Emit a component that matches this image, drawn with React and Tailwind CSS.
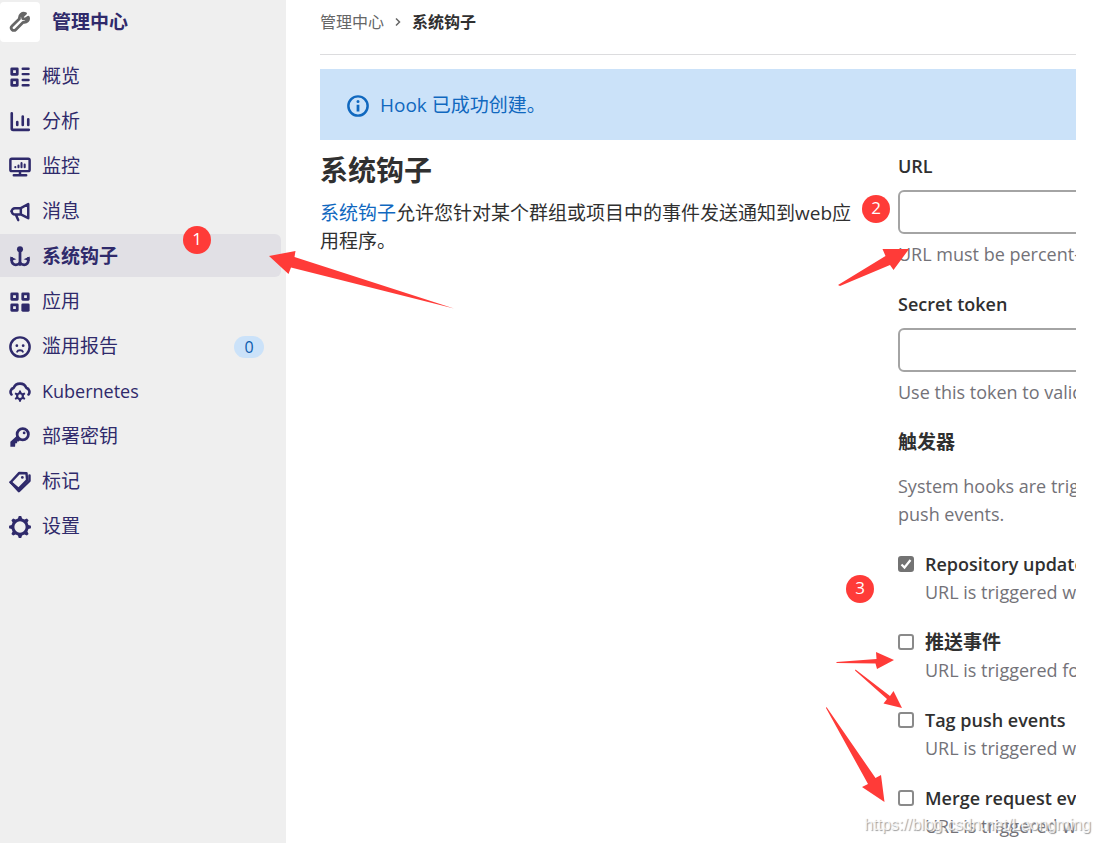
const SANS = "font-['Open_Sans','Noto_Sans_CJK_SC',sans-serif]"

function Icon({ size = 22, children }) {
  return (
    <svg width={size} height={size} viewBox="0 0 16 16" fill="currentColor" fillRule="evenodd" className="shrink-0" aria-hidden="true">
      {children}
    </svg>
  )
}

const stroke = { fill: 'none', stroke: 'currentColor', strokeWidth: 1.8, strokeLinecap: 'round', strokeLinejoin: 'round' }

function gearPath(cx, cy, outer, inner, teeth) {
  const points = []
  for (let i = 0; i < teeth; i++) {
    const base = (i * 2 * Math.PI) / teeth - Math.PI / 2
    const half = Math.PI / teeth
    const steps = [[-half * 0.62, inner], [-half * 0.28, outer], [half * 0.28, outer], [half * 0.62, inner]]
    steps.forEach(([a, r]) => {
      points.push(`${(cx + r * Math.cos(base + a)).toFixed(2)} ${(cy + r * Math.sin(base + a)).toFixed(2)}`)
    })
  }
  return `M${points.join('L')}Z`
}

const ICONS = {
  overview: (
    <>
      <path d="M2 1h4a1 1 0 0 1 1 1v4a1 1 0 0 1-1 1H2a1 1 0 0 1-1-1V2a1 1 0 0 1 1-1Zm1 2v2h2V3ZM2 9h4a1 1 0 0 1 1 1v4a1 1 0 0 1-1 1H2a1 1 0 0 1-1-1v-4a1 1 0 0 1 1-1Zm1 2v2h2v-2Z" />
      <path {...stroke} d="M10 2h4.2M10 5.900h4.200M10 10.100h4.200M10 14h4.200" />
    </>
  ),
  analytics: (
    <path {...stroke} strokeWidth="1.900" d="M2 1.700v11a1 1 0 0 0 1 1h11.400M6 8v2.200M10 4v6.200M14 6v4.200" />
  ),
  monitor: (
    <>
      <path {...stroke} d="M2 2h12a1 1 0 0 1 1 1v7a1 1 0 0 1-1 1H2a1 1 0 0 1-1-1V3a1 1 0 0 1 1-1ZM8 11v2.500M3.500 14h9" />
      <path {...stroke} strokeWidth="1.500" d="M4.600 8v.1M6.900 6.900v1.200M9.100 5.200v2.900M11.400 6.200v1.900" />
    </>
  ),
  bullhorn: (
    <path {...stroke} d="M14 2.200v10.300L8.600 9.800H4.300A2.300 2.300 0 0 1 2 7.500a2.300 2.300 0 0 1 2.300-2.300h4.300ZM8.600 5.300v4.300M5 10l1.700 3.900M2 7.500h-.3" />
  ),
  hook: (
    <>
      <circle cx="8" cy="2.300" r="2.200" />
      <path {...stroke} strokeWidth="2" d="M8 3v10.500M2 9v1.400A3 3 0 0 0 5 13.700C6.500 13.700 8 12.700 8 11.500 8 12.700 9.500 13.700 11 13.700a3 3 0 0 0 3-3.300V9" />
      <path d="m1 7.600 4.400 2-4.400 1.300ZM15 7.600l-4.400 2 4.400 1.300Z" />
    </>
  ),
  applications: (
    <>
      <path d="M2 1h4a1 1 0 0 1 1 1v4a1 1 0 0 1-1 1H2a1 1 0 0 1-1-1V2a1 1 0 0 1 1-1Zm1 2v2h2V3ZM2 9h4a1 1 0 0 1 1 1v4a1 1 0 0 1-1 1H2a1 1 0 0 1-1-1v-4a1 1 0 0 1 1-1Zm1 2v2h2v-2ZM10 1h4a1 1 0 0 1 1 1v4a1 1 0 0 1-1 1h-4a1 1 0 0 1-1-1V2a1 1 0 0 1 1-1Zm1 2v2h2V3Z" />
      <rect x="9" y="9" width="6" height="6" rx="1" />
    </>
  ),
  abuse: (
    <>
      <circle {...stroke} cx="8" cy="8" r="7" />
      <circle cx="5.700" cy="7" r="1" />
      <circle cx="10.300" cy="7" r="1" />
      <path {...stroke} strokeWidth="1.400" d="M5.900 11.400c.4-1.300 3.800-1.300 4.200 0" />
    </>
  ),
  kubernetes: (
    <>
      <path {...stroke} strokeWidth="1.900" d="M1.800 9.800A3 3 0 0 1 3.400 5C4.200 2.800 5.900 1.900 8 1.900s3.800.9 4.600 3.100a3 3 0 0 1 1.600 4.800" />
      <path d={`${gearPath(8, 11, 4.2, 2.9, 6)}M8 9.700a1.300 1.300 0 1 0 0 2.600 1.300 1.300 0 0 0 0-2.600Z`} />
    </>
  ),
  key: (
    <>
      <circle {...stroke} strokeWidth="2" cx="10" cy="6" r="4.100" />
      <path d="m1 11.500 5-4.600 2.700 2.800L7 11.300H5.900v1.300H4.600L4.400 15H1Z" />
      <circle cx="11" cy="5" r="1" />
    </>
  ),
  labels: (
    <>
      <path {...stroke} d="m1.200 8.200 6.300-6.800 5.200.2.500 5L7 13Z" />
      <path {...stroke} d="m1.200 8.200 6 6.500 7.700-7.600V3.300" />
      <circle cx="9.700" cy="4.700" r="1" />
    </>
  ),
  settings: (
    <path d={`${gearPath(8, 8, 8, 6.3, 8)}M8 3.900a4.100 4.100 0 1 0 0 8.200 4.100 4.100 0 0 0 0-8.200Z`} />
  ),
}

const NAV_ITEMS = [
  { label: '概览', icon: 'overview' },
  { label: '分析', icon: 'analytics' },
  { label: '监控', icon: 'monitor' },
  { label: '消息', icon: 'bullhorn' },
  { label: '系统钩子', icon: 'hook', active: true },
  { label: '应用', icon: 'applications' },
  { label: '滥用报告', icon: 'abuse', count: 0 },
  { label: 'Kubernetes', icon: 'kubernetes', latin: true },
  { label: '部署密钥', icon: 'key' },
  { label: '标记', icon: 'labels' },
  { label: '设置', icon: 'settings' },
]

const TRIGGERS = [
  { id: 'repository', label: 'Repository update events', help: 'URL is triggered when', checked: true },
  { id: 'push', label: '推送事件', help: 'URL is triggered for', cjk: true },
  { id: 'tag', label: 'Tag push events', help: 'URL is triggered when' },
  { id: 'merge', label: 'Merge request events', help: 'URL is triggered when' },
]

function Sidebar() {
  return (
    <aside className="w-[286px] shrink-0 bg-[#efefef] text-[#2f2a6b]">
      <a href="#admin" className="flex h-11 items-center gap-3 text-[19px] font-bold">
        <span className="flex size-10 items-center justify-center rounded bg-white text-[#666]">
          <Icon>
            <path {...stroke} strokeWidth="2" d="M14 4.500 11.800 6l-1.800-.5L9.700 4 12 1.800C9.500 1 7.200 2.800 7.600 5.600L2.200 10.900a1.900 1.900 0 0 0 2.700 2.700l5.400-5.400C13 8.700 14.900 6.500 14 4.500Z" />
          </Icon>
        </span>
        管理中心
      </a>
      <nav className="mt-[10px] flex flex-col gap-[2px]">
        {NAV_ITEMS.map(item => (
          <a
            key={item.label}
            href={`#${item.icon}`}
            className={`mr-[5px] flex h-[43px] items-center rounded-r-md pl-[9px] pr-[17px] pt-[2px] ${item.active ? 'bg-[#e1e0e5] font-bold' : ''}`}
          >
            <Icon>{ICONS[item.icon]}</Icon>
            <span className={`ml-[11px] flex-1 ${item.latin ? 'text-[18px]' : 'text-[19px]'}`}>{item.label}</span>
            {item.count !== undefined && (
              <span className="flex h-[22px] w-[30px] items-center justify-center rounded-full bg-[#cbe2f9] text-base text-[#0b5cad]">
                {item.count}
              </span>
            )}
          </a>
        ))}
      </nav>
    </aside>
  )
}

function TextField({ id, label, help }) {
  return (
    <div className="whitespace-nowrap">
      <label htmlFor={id} className="block font-semibold leading-7">{label}</label>
      <input id={id} type="text" className="mt-[10px] block h-11 w-[120%] rounded-md border-2 border-[#a4a4a4] bg-white px-3" />
      <p className="mt-[6px] leading-7 text-[#737278]">{help}</p>
    </div>
  )
}

function Trigger({ id, label, help, checked, cjk }) {
  return (
    <div className="flex gap-[11px] whitespace-nowrap">
      <span className="flex h-7 items-center">
        <input
          id={id}
          type="checkbox"
          defaultChecked={checked}
          aria-describedby={`${id}-help`}
          className="peer size-4 shrink-0 appearance-none rounded-[3px] border-2 border-[#8a8a8a] bg-white checked:border-[#737373] checked:bg-[#737373]"
        />
        <svg viewBox="0 0 16 16" className="pointer-events-none invisible -ml-4 size-4 peer-checked:visible" aria-hidden="true">
          <path d="m3.500 8.500 3 3 6-7.500" fill="none" stroke="#fff" strokeWidth="2.200" />
        </svg>
      </span>
      <div className="leading-7">
        <label htmlFor={id} className={`block ${cjk ? 'text-[19px] font-bold' : 'font-semibold'}`}>{label}</label>
        <p id={`${id}-help`} className="text-[#737278]">{help}</p>
      </div>
    </div>
  )
}

// Red markers that lie over the page
function Annotations() {
  return (
    <div className="pointer-events-none absolute inset-0 overflow-hidden text-[17px] text-white">
      <svg className="absolute left-0 top-0" width="1099" height="843" fill="#ff3b38" aria-hidden="true">
        <path d="M269 256 295.500 251 294.500 257 454 308.500 291 267.500 288.500 274Z" />
        <path d="M909 249 893.500 270 890 265 840 286 838 285 885.500 256 882.500 249Z" />
        <path d="m894 660-17 9-1.500-5.500-39-.5v-1l40-3-.5-7Z" />
        <path d="m902 708-18.500-4.500 3.500-4.500-32-28.500.5-1L890 696l3.500-5Z" />
        <path d="m884.500 802-22.500-15 6-3-42-76 .5-1 49 71 5.500-3Z" />
      </svg>
      <span className="absolute left-[183px] top-[226px] flex size-7 items-center justify-center rounded-full bg-[#ff3b38] pb-[2px]">1</span>
      <span className="absolute left-[862px] top-[195px] flex size-7 items-center justify-center rounded-full bg-[#ff3b38] pb-[2px]">2</span>
      <span className="absolute left-[846px] top-[575px] flex size-7 items-center justify-center rounded-full bg-[#ff3b38] pb-[2px]">3</span>
      <span className="absolute right-2 top-[813px] font-['Liberation_Sans',sans-serif] text-base text-white/80 [text-shadow:1px_1px_1px_#999]">
        https://blog.csdn.net/Leongming
      </span>
    </div>
  )
}

export default function App() {
  return (
    <div className={`relative flex min-h-screen bg-white text-[18px] text-[#303030] ${SANS}`}>
      <Sidebar />
      <main className="min-w-0 flex-1 pl-[34px] pr-[23px]">
        <nav aria-label="Breadcrumb" className="flex h-[55px] items-center gap-2 border-b border-[#dcdcde] pb-[10px] text-base">
          <a href="#admin" className="text-[#666]">管理中心</a>
          <svg width="12" height="12" viewBox="0 0 12 12" aria-hidden="true">
            <path d="m4 2.500 3.500 3.500L4 9.500" fill="none" stroke="#666" strokeWidth="1.500" />
          </svg>
          <a href="#hooks" className="font-bold">系统钩子</a>
        </nav>
        <div role="status" className="mt-[14px] flex h-[71px] items-center gap-[11px] bg-[#cbe2f9] pl-[27px] pt-[2px] text-[19px] text-[#1068bf]">
          <Icon>
            <circle {...stroke} cx="8" cy="8" r="7" />
            <path d="M7 7h2v5H7ZM8 3.700a1.100 1.100 0 1 1 0 2.200 1.100 1.100 0 0 1 0-2.200Z" />
          </Icon>
          <span>Hook 已成功创建。</span>
        </div>
        <div className="flex pt-3">
          <section className="w-[534px] shrink-0">
            <h1 className="text-[28px] font-bold leading-9">系统钩子</h1>
            <p className="mt-[11px] text-[19px] leading-7">
              <a href="#help" className="text-[#1068bf]">系统钩子</a>允许您针对某个群组或项目中的事件发送通知到web应用程序。
            </p>
          </section>
          <form className="ml-11 flex min-w-0 flex-1 flex-col overflow-hidden">
            <TextField id="url" label="URL" help="URL must be percent-encoded" />
            <div className="mt-[22px]">
              <TextField id="token" label="Secret token" help="Use this token to validate" />
            </div>
            <fieldset className="mt-[22px]">
              <legend className="text-[19px] font-bold leading-7">触发器</legend>
              <p className="mt-4 whitespace-nowrap leading-7 text-[#737278]">
                System hooks are triggered<br />push events.
              </p>
              <div className="mt-[22px] flex flex-col gap-[22px]">
                {TRIGGERS.map(trigger => <Trigger key={trigger.id} {...trigger} />)}
              </div>
            </fieldset>
          </form>
        </div>
      </main>
      <Annotations />
    </div>
  )
}
